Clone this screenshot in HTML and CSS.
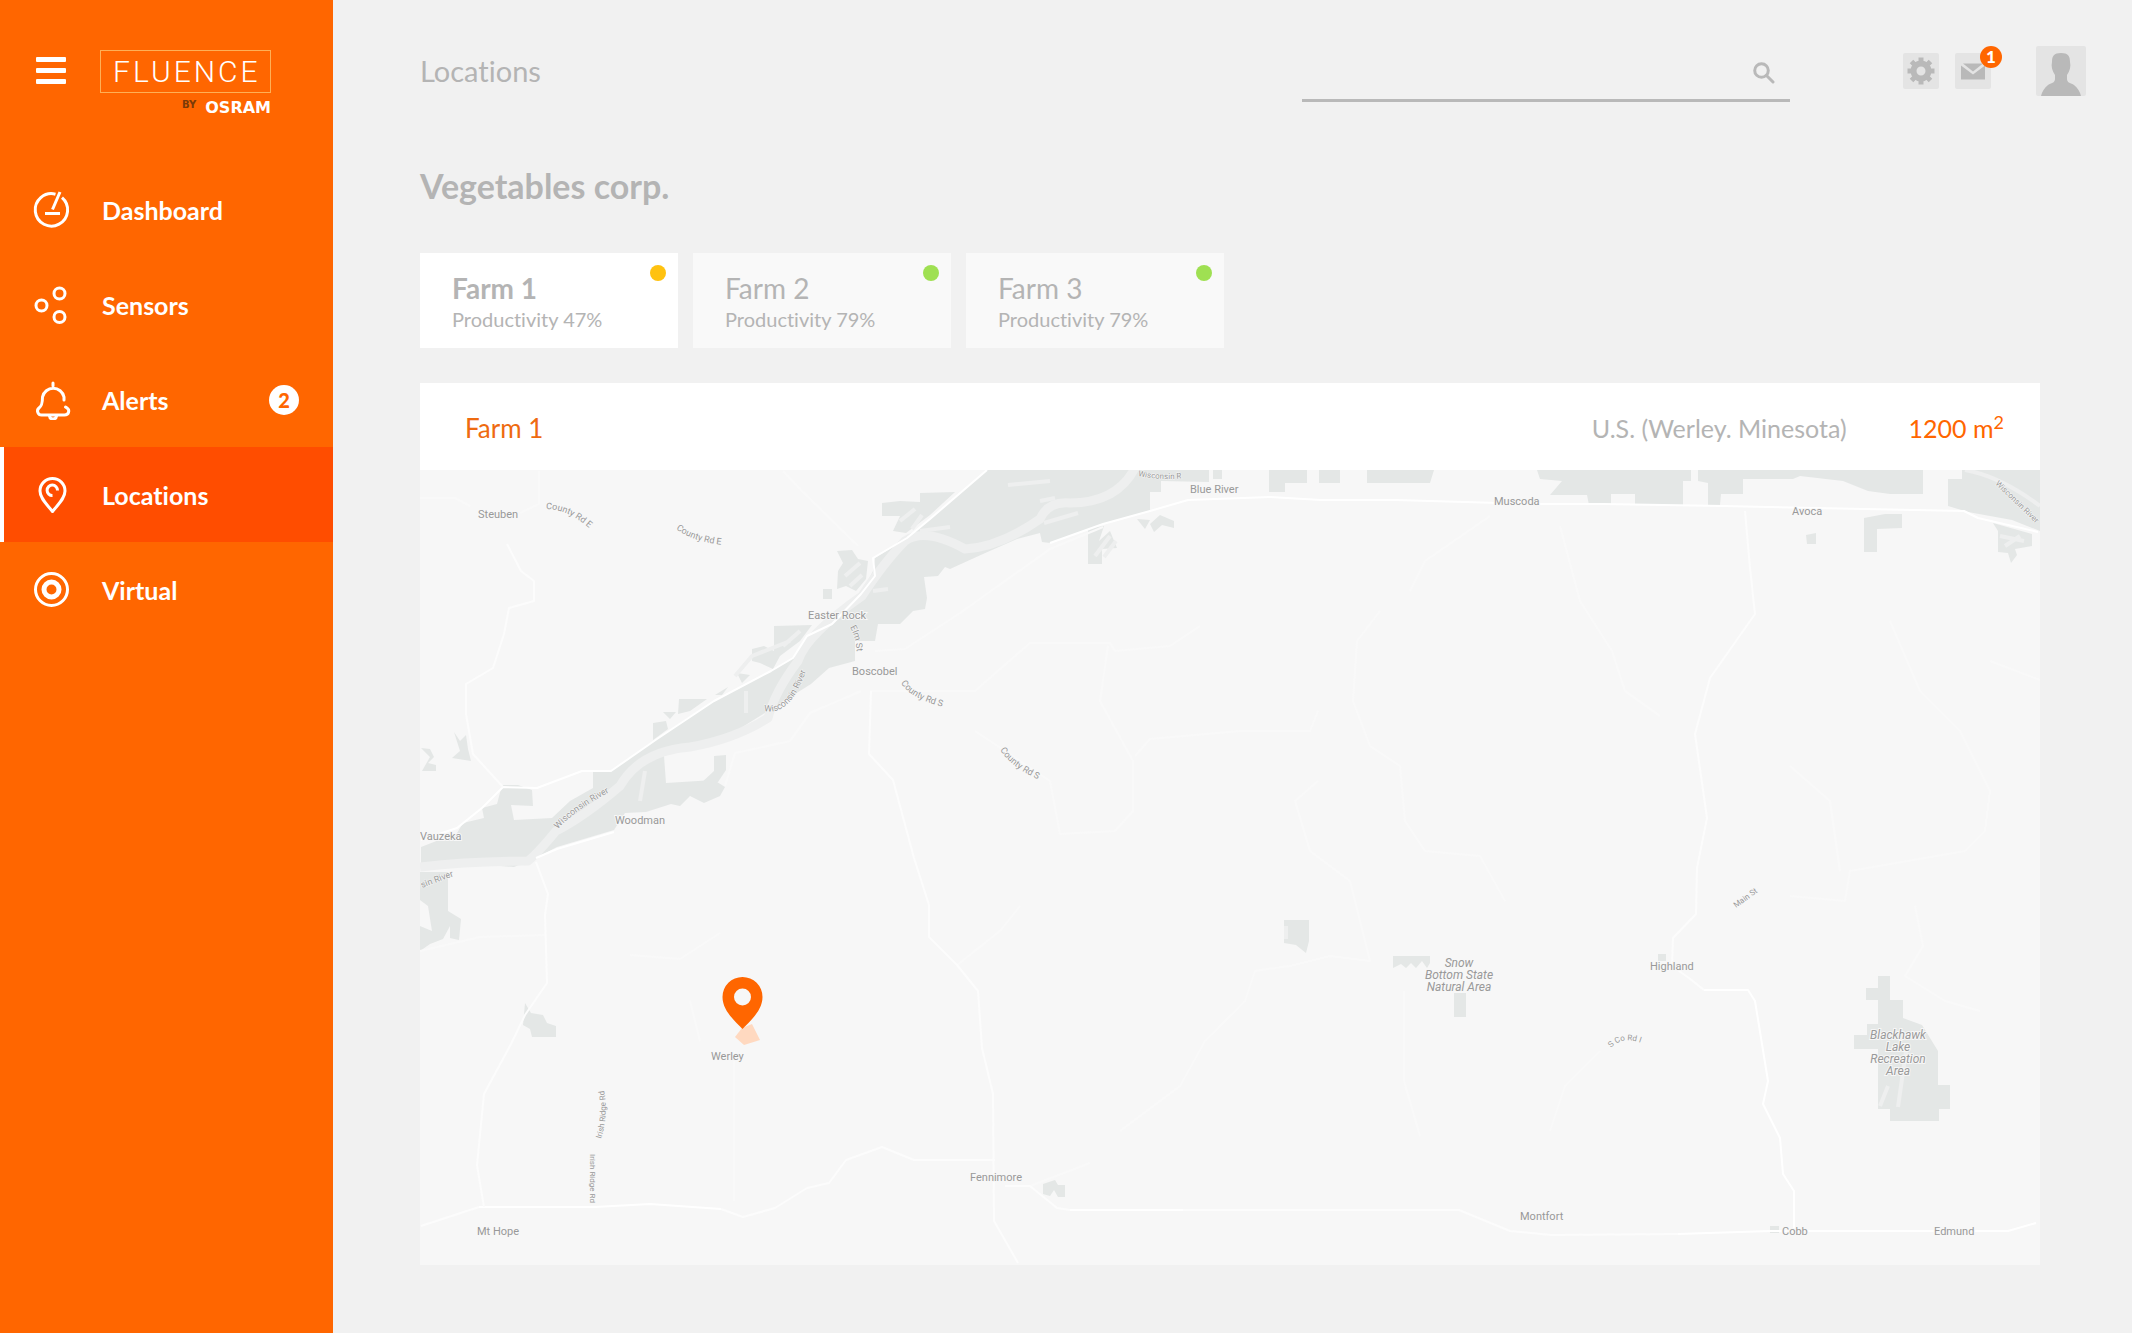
FILE: index.html
```html
<!DOCTYPE html>
<html lang="en">

<head>
    <meta charset="UTF-8">
    <meta name="viewport" content="width=device-width, initial-scale=1.0">
    <title>Fluence - Locations</title>
    <link rel="stylesheet" href="styles.css">
</head>

<body>

<aside class="sidebar">
    <div class="brand">
        <button class="menu-toggle" type="button" aria-label="Toggle menu">
            <span></span>
            <span></span>
            <span></span>
        </button>
        <a class="logo" href="#">
            <span class="logo-name">FLUENCE</span>
            <span class="logo-by"><small>BY</small> OSRAM</span>
        </a>
    </div>

    <nav class="nav">
        <a class="nav-item" href="#">
            <svg class="nav-icon" viewBox="0 0 40 40">
                <path d="M23.5 4.2A16.2 16.2 0 1 0 30 7.6"/>
                <path d="M28 2L20.5 19.5M13 23.5H28"/>
            </svg>
            <span>Dashboard</span>
        </a>
        <a class="nav-item" href="#">
            <svg class="nav-icon" viewBox="0 0 40 40">
                <circle cx="9.5" cy="20.5" r="5.5"/>
                <circle cx="27.5" cy="8.5" r="5.5"/>
                <circle cx="27.5" cy="32" r="5.5"/>
            </svg>
            <span>Sensors</span>
        </a>
        <a class="nav-item" href="#">
            <svg class="nav-icon thin" viewBox="0 0 40 40">
                <path d="M21 3V6M32 20V17A11 11 0 0 0 10.500 17C10.500 24 9.500 26 7 28C4 30.500 6 35 9.500 35H32.500C37 35 38 30 35 28L33.500 27"/>
                <path d="M17.500 36C18 40 24 40 24.500 36"/>
            </svg>
            <span>Alerts</span>
            <span class="nav-badge">2</span>
        </a>
        <a class="nav-item active" href="#">
            <svg class="nav-icon" viewBox="0 0 40 40">
                <path d="M20.5 36.500C15 29.500 8 23.500 8 16A12.500 12.500 0 0 1 33 16C33 23.500 26 29.500 20.500 36.500Z"/>
                <path d="M25.500 15.500A5.200 5.200 0 1 0 20.500 20.500"/>
            </svg>
            <span>Locations</span>
        </a>
        <a class="nav-item" href="#">
            <svg class="nav-icon" viewBox="0 0 40 40">
                <circle cx="19.5" cy="19.5" r="16"/>
                <circle class="ring" cx="19.5" cy="19.5" r="7.5"/>
            </svg>
            <span>Virtual</span>
        </a>
    </nav>
</aside>

<main class="main">
    <header class="topbar">
        <h1>Locations</h1>
        <form class="search" role="search">
            <input type="search" aria-label="Search">
            <button type="submit" aria-label="Search">
                <svg viewBox="0 0 22 22"><circle cx="8.5" cy="8.5" r="6.8"/><path d="M13.5 13.5L20 20"/></svg>
            </button>
        </form>
        <div class="actions">
            <button class="tile" type="button" aria-label="Settings">
                <svg viewBox="0 0 36 36">
                    <circle cx="18" cy="18" r="7.5" fill="none" stroke="#b9b9b9" stroke-width="6"/>
                    <path d="M18 4.5V9M18 27V31.5M4.5 18H9M27 18H31.5M8.5 8.5L11.5 11.5M24.5 24.5L27.5 27.5M8.5 27.5L11.5 24.5M24.5 11.5L27.5 8.5" fill="none" stroke="#b9b9b9" stroke-width="5"/>
                </svg>
            </button>
            <button class="tile" type="button" aria-label="Messages">
                <svg viewBox="0 0 36 36">
                    <path d="M8 10.5H28L18 18.5Z"/>
                    <path d="M6 12.500L18 21.500L30 12.500V26.500H6Z"/>
                </svg>
                <span class="tile-badge">1</span>
            </button>
            <button class="tile avatar" type="button" aria-label="Account">
                <svg viewBox="0 0 50 50">
                    <path d="M25 7C32 7 34 10 34 16C35 20 34 25 31 29V33C31 37 35 37 38 39C42 42 44 46 45 50H5C6 46 8 42 12 39C15 37 19 37 19 33V29C16 25 15 20 16 16C16 10 18 7 25 7Z"/>
                </svg>
            </button>
        </div>
    </header>

    <div class="content">
        <h2>Vegetables corp.</h2>

        <div class="farms">
            <button class="farm selected" type="button">
                <span class="farm-name">Farm 1</span>
                <span class="farm-info">Productivity 47%</span>
                <span class="dot warning"></span>
            </button>
            <button class="farm" type="button">
                <span class="farm-name">Farm 2</span>
                <span class="farm-info">Productivity 79%</span>
                <span class="dot"></span>
            </button>
            <button class="farm" type="button">
                <span class="farm-name">Farm 3</span>
                <span class="farm-info">Productivity 79%</span>
                <span class="dot"></span>
            </button>
        </div>

        <section class="panel">
            <div class="panel-header">
                <h3>Farm 1</h3>
                <span class="place">U.S. (Werley. Minesota)</span>
                <span class="area">1200 m<sup>2</sup></span>
            </div>

            <svg class="map" viewBox="420 469 1620 795" role="img" aria-label="Map of Farm 1">
                <!-- forests -->
                <g class="forest">
                    <path d="M987 469L930 518L907 537L875 557L873 570L861 593L832 623L807 635L793 657L771 670L739 687L714 700L686 718L657 738L629 757L611 770L593 771V787L570 800L552 817L514 819L511 804L533 805L532 789L518 784H502L497 803L482 807L484 817L463 822L457 832L421 846V866L486 864L514 866L536 857L557 846L614 829L625 812L646 811L671 803L680 805L690 795L704 802L720 795L725 786L714 779L666 782L664 755L707 740L736 730L779 703L811 683L829 667L855 660V640L875 640L878 623H900L913 610L925 608L927 597L924 576L938 575L945 566L950 568L983 553L1017 538L1040 532L1042 541L1050 542L1103 523L1150 510V491H1161V480L1209 481V469Z"/>
                    <path d="M714 755L726 754V769L718 781L700 783L714 770Z"/>
                    <path d="M882 502L900 500L920 501V492L955 491L930 514L906 532L893 530L900 515H882Z"/>
                    <path d="M837 550L852 549L858 558L868 560L866 578L856 590L846 585L837 588L838 570L843 562Z"/>
                    <path d="M823 588H832V598H823ZM774 625L812 624L800 640L780 655L773 668L760 662L752 660V648L764 645L774 650Z"/>
                    <path d="M737 672L750 674L742 682ZM715 694L728 686L722 694ZM679 698L707 698L690 710L678 713ZM663 711L676 711L670 718ZM653 722L666 720L668 728L653 739Z"/>
                    <path d="M420 871H448V910L461 918L459 939L450 937V925L443 938L430 943L420 950V925L432 930L428 905L420 899Z"/>
                    <path d="M525 1002L531 1012L543 1014L547 1022L556 1025V1036H532L530 1028L523 1024Z"/>
                    <path d="M421 747L430 748L434 756L428 762L436 764V770H422L430 756ZM454 731L460 740L466 734L468 748L471 760L452 757L460 750Z"/>
                    <path d="M1088 527L1104 525L1099 540L1110 530L1117 547L1102 548V563H1088ZM1137 518L1150 519L1145 528ZM1150 523L1160 514L1174 520V527L1162 524L1154 531Z"/>
                    <path d="M1213 469H1222V478H1213ZM1269 469H1307V482H1285V491H1269ZM1319 469H1340V482H1319ZM1367 469H1434L1430 482H1367Z"/>
                    <path d="M1537 469H1691V480H1683V504H1635V493H1611V504H1589L1587 494H1550L1562 480L1540 478Z"/>
                    <path d="M1698 469H1923V493H1890L1868 490L1843 480L1800 475L1793 478H1743V493H1721L1720 504H1708V482L1698 480Z"/>
                    <path d="M1962 469H2040V530L2012 519L1968 511L1948 505V478H1962Z"/>
                    <path d="M1864 517L1885 513H1902V527L1877 528V551H1864ZM1806 534L1816 532V543H1807ZM1993 522L2032 533V545L2015 548L2017 554L2011 562L2008 552L1998 551V530Z"/>
                    <path d="M1284 919H1309V940L1306 952L1296 944L1284 942ZM1393 955H1430V962L1427 967L1422 960L1416 967L1411 962L1406 967L1401 963L1393 967ZM1454 992H1466V1016H1454Z"/>
                    <path d="M1878 975H1890V999H1903V1017L1922 1024L1938 1050V1084H1950V1108H1939V1120H1890V1108H1878V1048H1854V1034H1867V1023H1878V999H1866V987H1878Z"/>
                    <path d="M1043 1183L1055 1179L1058 1184L1065 1184V1196H1058L1054 1189L1050 1195L1043 1193ZM1770 1225H1779V1232H1770ZM1658 953H1666V960H1658Z"/>
                </g>

                <!-- wisconsin river -->
                <g class="river">
                    <path d="M1136 465Q1118 502 1070 502Q1048 500 1040 518Q1000 546 965 548Q925 526 905 540Q885 560 862 595Q806 634 798 660Q775 690 768 717Q735 738 690 746Q640 750 620 785Q585 815 556 830Q538 852 528 860Q470 860 420 866"/>
                    <path class="narrow" d="M1008 484L1050 480M920 530L950 526M873 590L888 588M1044 522L1078 512M735 675L752 655L790 640M645 770L640 800M1040 500L1055 497M1965 469Q2000 475 2040 505M746 712V690M900 520L915 508M912 528L922 514M845 575L860 562M850 585L862 574M783 645L800 630M1095 555L1110 535M1104 556L1116 540M2000 535L2024 540M2005 545L2020 535M1888 1085L1880 1105M1906 1050L1898 1106M1286 925V938"/>
                </g>

                <!-- roads -->
                <g class="road minor">
                    <path d="M875 650L905 648L960 612L1005 580L1050 548L1103 526M420 497L455 497L470 505M783 470L800 488L858 545M539 470V503L520 512"/>
                    <path d="M861 690L810 712L790 740L735 752L725 785M870 690H975L1000 668L1030 642L1110 642L1115 650L1170 645L1200 625M1108 645L1100 700L1133 760V810L1115 830L1060 833L1050 780L975 730"/>
                    <path d="M1490 515L1425 560L1410 590M1380 610L1357 640L1353 700L1370 745L1400 765L1405 820L1425 850L1480 855L1505 900M1560 525L1580 600L1612 650L1625 690L1660 715M1135 755L1150 738L1240 730H1310L1318 710"/>
                    <path d="M1318 780L1295 800L1310 850L1350 880L1370 960L1330 955L1290 965L1255 970L1245 1000L1205 1040L1180 1085L1120 1130M1404 990V1080L1420 1135M1890 620L1920 690L1960 730L1990 790L1985 830L1965 850L1850 870L1845 900L1790 895"/>
                    <path d="M1790 765L1830 800L1840 870M1600 1050L1565 1085L1550 1130M1915 905L1923 945L1905 975L1945 1000L1980 1010M420 950L480 936L545 934M630 954L680 958L720 932M690 1000L700 1040M734 1050V1200M957 964L1000 930L1020 905M2040 679L1990 660M1030 1185L1090 1162"/>
                </g>
                <g class="road">
                    <path d="M987 469L930 518L907 537L873 557L875 575L861 593L832 623L807 635L793 657L771 670L714 700L657 738L611 770H582L537 787L503 786L482 807L457 827L421 839"/>
                    <path d="M1050 542L1103 523L1150 510L1188 499L1270 496L1321 499H1395L1536 503H1603L1723 505L1964 510L1978 517L2038 531M536 857L557 848L614 831"/>
                    <path d="M595 1206L650 1203L721 1208M479 1206H596M1070 1209H1183M1704 989H1748L1755 1000L1768 1080L1763 1103L1780 1137L1783 1173L1794 1190V1230M1678 1233L1770 1230H1985L2008 1230L2036 1222"/>
                </g>
                <g class="road soft">
                    <path d="M507 543L521 570L534 580V600L509 607L504 633L493 667L466 683V713L473 753L503 786M536 861L548 893L545 914L547 982L525 1014L511 1043L484 1093L477 1164L484 1206"/>
                    <path d="M421 1225L479 1206M721 1208L743 1216L775 1207L807 1187L829 1182L846 1159L882 1146L914 1159H995M871 690L869 753L893 779L914 857L929 904V936L957 964L978 990L982 1047L993 1093L994 1220L1018 1262"/>
                    <path d="M1005 1185H1030L1057 1207L1070 1209M1183 1209H1459L1510 1230L1551 1234L1678 1233M1704 989L1689 977L1672 965L1673 937L1696 913L1697 867L1707 817L1695 733L1710 677L1755 613L1750 567L1745 510"/>
                </g>

                <!-- towns -->
                <g class="towns">
                    <text x="478" y="517">Steuben</text>
                    <text x="1190" y="492">Blue River</text>
                    <text x="1494" y="504">Muscoda</text>
                    <text x="1792" y="514">Avoca</text>
                    <text x="808" y="618">Easter Rock</text>
                    <text x="852" y="674">Boscobel</text>
                    <text x="615" y="823">Woodman</text>
                    <text x="420" y="839">Vauzeka</text>
                    <text x="711" y="1059">Werley</text>
                    <text x="970" y="1180">Fennimore</text>
                    <text x="477" y="1234">Mt Hope</text>
                    <text x="1650" y="969">Highland</text>
                    <text x="1520" y="1219">Montfort</text>
                    <text x="1782" y="1234">Cobb</text>
                    <text x="1934" y="1234">Edmund</text>
                </g>
                <g class="parks">
                    <text x="1459" y="966">Snow</text>
                    <text x="1459" y="978">Bottom State</text>
                    <text x="1459" y="990">Natural Area</text>
                    <text x="1898" y="1038">Blackhawk</text>
                    <text x="1898" y="1050">Lake</text>
                    <text x="1898" y="1062">Recreation</text>
                    <text x="1898" y="1074">Area</text>
                </g>

                <!-- road and river names follow these lines -->
                <defs>
                    <path id="county-e1" d="M546 508Q568 508 590 528"/>
                    <path id="county-e2" d="M676 528Q693 541 725 544"/>
                    <path id="county-s1" d="M901 682Q911 698 944 706"/>
                    <path id="county-s2" d="M1000 749Q1013 768 1042 780"/>
                    <path id="wisconsin1" d="M764 710Q792 716 808 664"/>
                    <path id="wisconsin2" d="M558 828Q575 808 620 786"/>
                    <path id="wisconsin3" d="M422 887L470 869"/>
                    <path id="wisconsin4" d="M1995 483L2055 541"/>
                    <path id="wisconsin5" d="M1138 475Q1166 481 1206 475"/>
                    <path id="elm" d="M850 626Q857 638 857 660"/>
                    <path id="irish1" d="M601 1138Q610 1110 602 1080"/>
                    <path id="irish2" d="M590 1153V1220"/>
                    <path id="main-st" d="M1736 907L1766 885"/>
                    <path id="county-i" d="M1611 1047Q1624 1032 1650 1046"/>
                </defs>
                <g class="streets">
                    <text><textPath href="#county-e1">County Rd E</textPath></text>
                    <text><textPath href="#county-e2">County Rd E</textPath></text>
                    <text><textPath href="#county-s1">County Rd S</textPath></text>
                    <text><textPath href="#county-s2">County Rd S</textPath></text>
                    <text><textPath href="#wisconsin1">Wisconsin River</textPath></text>
                    <text><textPath href="#wisconsin2">Wisconsin River</textPath></text>
                    <text><textPath href="#wisconsin3">sin River</textPath></text>
                    <text class="small"><textPath href="#wisconsin4">Wisconsin River</textPath></text>
                    <text class="small"><textPath href="#wisconsin5">Wisconsin R</textPath></text>
                    <text><textPath href="#elm">Elm St</textPath></text>
                    <text class="small"><textPath href="#irish1">Irish Ridge Rd</textPath></text>
                    <text class="small"><textPath href="#irish2">Irish Ridge Rd</textPath></text>
                    <text class="small"><textPath href="#main-st">Main St</textPath></text>
                    <text class="small"><textPath href="#county-i">S Co Rd I</textPath></text>
                </g>

                <!-- pin -->
                <path class="pin-shadow" d="M742 1027L752 1023L760 1039L744 1044L735 1036Z"/>
                <path class="pin" d="M742.5 1028C736 1021 722.5 1010 722.5 996A20 20 0 0 1 762.5 996C762.5 1010 749 1021 742.5 1028Z"/>
                <circle class="pin-hole" cx="742.5" cy="996" r="8.5"/>
            </svg>
        </section>
    </div>
</main>

</body>
</html>
```
FILE: styles.css
```css
:root {
    --primary-color: #ff6600;
    --active-color: #ff4d00;
    --background-color: #f1f1f1;
    --text-color: #b4b4b4;
    --map-color: #f7f7f7;
    --forest-color: #e4e7e6;
}

* {
    margin: 0;
    padding: 0;
    box-sizing: border-box;
}

body {
    font-family: Lato, 'Noto Sans', sans-serif;
    font-variant-ligatures: none;
    color: var(--text-color);
    background: var(--background-color);
    display: flex;
    min-height: 100vh;
}

button,
input {
    font: inherit;
    font-variant-ligatures: none;
    color: inherit;
    border: 0;
    background: none;
}

button {
    cursor: pointer;
}

a {
    color: inherit;
    text-decoration: none;
}

/* Sidebar */
.sidebar {
    flex: 0 0 333px;
    background: var(--primary-color);
    color: #fff;
}

.brand {
    display: flex;
    align-items: flex-start;
    gap: 34px;
    height: 162px;
    padding: 50px 0 0 36px;
}

.menu-toggle {
    display: flex;
    flex-direction: column;
    gap: 6px;
    width: 30px;
    padding-top: 7px;
}

.menu-toggle span {
    height: 5px;
    border-radius: 1px;
    background: #fff;
}

.logo {
    width: 171px;
}

.logo-name {
    display: block;
    height: 43px;
    padding-left: 12px;
    border: 1px solid #ffb056;
    font-family: Roboto, sans-serif;
    font-size: 30px;
    font-weight: 300;
    line-height: 41px;
    letter-spacing: 3px;
}

.logo-by {
    display: flex;
    justify-content: flex-end;
    gap: 9px;
    padding-top: 5px;
    font-family: 'DejaVu Sans', sans-serif;
    font-size: 16px;
    font-weight: 700;
    line-height: 20px;
}

.logo-by small {
    font-size: 10px;
    line-height: 14px;
    color: #7a3a08;
}

.nav-item {
    display: flex;
    align-items: center;
    height: 95px;
    padding: 0 34px 0 32px;
    font-size: 25px;
    font-weight: 700;
}

.nav-item.active {
    background: var(--active-color);
    box-shadow: inset 4px 0 #fff;
}

.nav-icon {
    width: 40px;
    height: 40px;
    margin-right: 30px;
    fill: none;
    stroke: #fff;
    stroke-width: 3;
    stroke-linejoin: round;
}

.nav-icon.thin {
    stroke-width: 3;
    stroke-linecap: round;
}

.nav-icon .ring {
    stroke-width: 5;
}

.nav-badge {
    width: 30px;
    height: 30px;
    margin-left: auto;
    border-radius: 50%;
    background: #fff;
    color: var(--primary-color);
    font-size: 20px;
    font-weight: 900;
    line-height: 30px;
    text-align: center;
}

/* Top bar */
.main {
    flex: 1;
    min-width: 0;
    padding: 46px 46px 69px 87px;
}

.topbar {
    display: flex;
    align-items: flex-start;
}

h1 {
    font-size: 29px;
    font-weight: 400;
    line-height: 50px;
}

.search {
    display: flex;
    align-items: flex-start;
    flex: 0 1 488px;
    height: 56px;
    margin-left: auto;
    padding-right: 15px;
    border-bottom: 3px solid #b9b9b9;
}

.search input {
    flex: 1;
    min-width: 0;
    height: 50px;
    font-size: 26px;
    outline: none;
}

.search button {
    width: 22px;
    height: 22px;
    margin-top: 16px;
}

.search svg {
    display: block;
    width: 22px;
    fill: none;
    stroke: #b9b9b9;
    stroke-width: 3;
    stroke-linecap: round;
}

.actions {
    display: flex;
    align-items: center;
    gap: 16px;
    height: 50px;
    margin-left: 113px;
}

.tile {
    position: relative;
    width: 36px;
    height: 36px;
    border-radius: 2px;
    background: #e4e4e4;
}

.tile svg {
    display: block;
    fill: #b9b9b9;
}

.avatar {
    width: 50px;
    height: 50px;
    margin-left: 29px;
}

.tile-badge {
    position: absolute;
    top: -7px;
    right: -11px;
    width: 22px;
    height: 22px;
    border-radius: 50%;
    background: var(--primary-color);
    color: #fff;
    font-size: 17px;
    font-weight: 900;
    line-height: 22px;
    text-align: center;
}

/* Content */
.content {
    margin-right: 46px;
}

h2 {
    margin: 64px 0 47px;
    font-size: 34px;
    font-weight: 700;
    line-height: 40px;
}

.farms {
    display: flex;
    gap: 15px;
    margin-bottom: 35px;
}

.farm {
    position: relative;
    width: 258px;
    height: 95px;
    padding: 2px 32px 0;
    background: #f9f9f9;
    text-align: left;
}

.farm.selected {
    background: #fff;
}

.farm span {
    display: block;
}

.farm .farm-name {
    font-size: 28px;
    line-height: 34px;
}

.farm.selected .farm-name {
    font-weight: 700;
}

.farm .farm-info {
    font-size: 20px;
    line-height: 28px;
}

.farm .dot {
    position: absolute;
    top: 12px;
    right: 12px;
    width: 16px;
    height: 16px;
    border-radius: 50%;
    background: #9fe052;
}

.farm .dot.warning {
    background: #ffc210;
}

.panel {
    background: #fff;
}

.panel-header {
    display: flex;
    align-items: center;
    height: 87px;
    padding: 2px 36px 0 45px;
    font-size: 25px;
}

.panel-header h3 {
    color: #ee6a10;
    font-size: 26px;
    font-weight: 400;
}

.place {
    margin-left: auto;
}

.area {
    margin-left: 62px;
    color: var(--primary-color);
}

.area sup {
    font-size: 18px;
    line-height: 0;
}

/* Map */
.map {
    display: block;
    width: 100%;
    background: var(--map-color);
}

.forest {
    fill: var(--forest-color);
}

.river {
    fill: none;
    stroke: #eeefef;
    stroke-width: 9;
    stroke-linejoin: round;
}

.river .narrow {
    stroke-width: 4;
}

.road {
    fill: none;
    stroke: #fff;
    stroke-width: 2;
    stroke-linejoin: round;
}

.road.soft {
    stroke: #fcfcfc;
}

.road.minor {
    stroke: #f9f9f9;
}

.map text {
    font-family: Roboto, sans-serif;
    font-size: 11px;
    fill: #999;
    stroke: var(--map-color);
    stroke-width: 2px;
    paint-order: stroke;
}

.map .parks text {
    font-size: 12px;
    font-style: italic;
    text-anchor: middle;
}

.map .streets text {
    font-size: 9px;
    stroke-width: 1px;
}

.map .streets .small {
    font-size: 8px;
}

.pin {
    fill: var(--primary-color);
}

.pin-hole {
    fill: var(--map-color);
}

.pin-shadow {
    fill: #ffd9c0;
}
```
